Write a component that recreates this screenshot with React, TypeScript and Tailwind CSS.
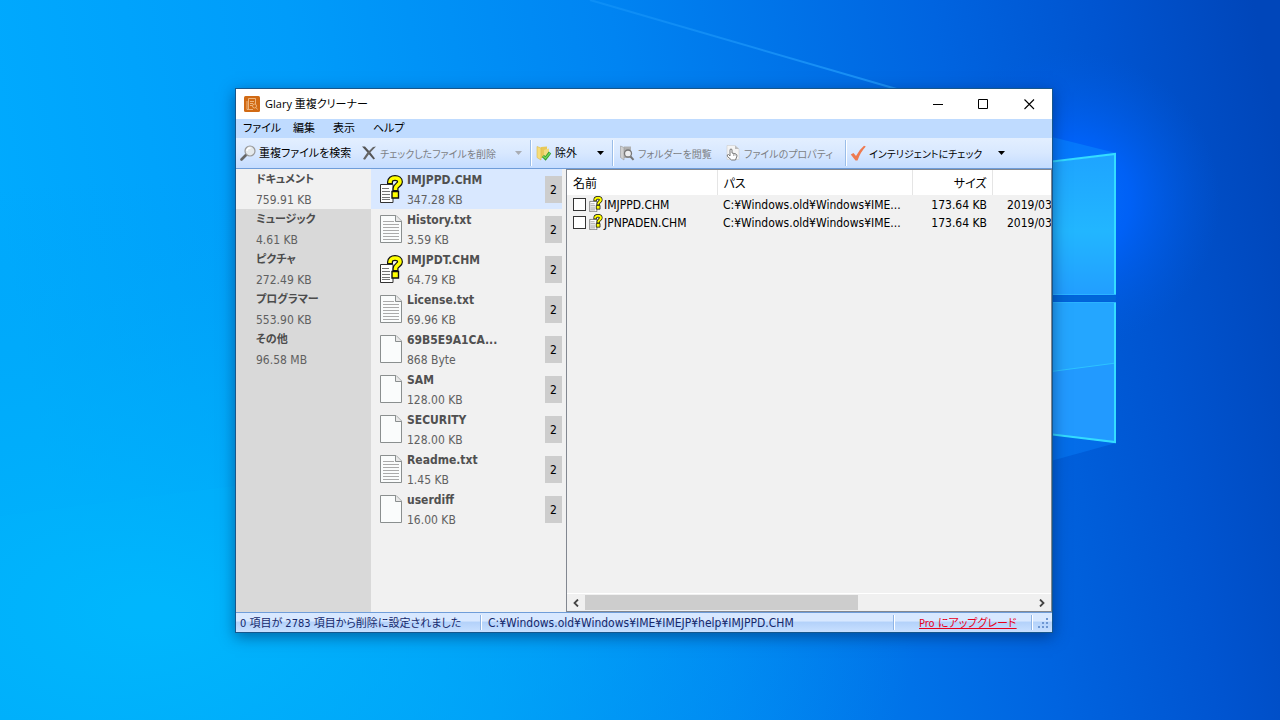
import type { ReactNode } from "react";
import clsx from "clsx";

type FileKind = "help" | "text" | "blank";

const categories = [
  { name: "ドキュメント", size: "759.91 KB" },
  { name: "ミュージック", size: "4.61 KB" },
  { name: "ピクチャ", size: "272.49 KB" },
  { name: "プログラマー", size: "553.90 KB" },
  { name: "その他", size: "96.58 MB" },
];

const groups: { name: string; size: string; kind: FileKind }[] = [
  { name: "IMJPPD.CHM", size: "347.28 KB", kind: "help" },
  { name: "History.txt", size: "3.59 KB", kind: "text" },
  { name: "IMJPDT.CHM", size: "64.79 KB", kind: "help" },
  { name: "License.txt", size: "69.96 KB", kind: "text" },
  { name: "69B5E9A1CA...", size: "868 Byte", kind: "blank" },
  { name: "SAM", size: "128.00 KB", kind: "blank" },
  { name: "SECURITY", size: "128.00 KB", kind: "blank" },
  { name: "Readme.txt", size: "1.45 KB", kind: "text" },
  { name: "userdiff", size: "16.00 KB", kind: "blank" },
];

const duplicates = ["IMJPPD.CHM", "JPNPADEN.CHM"];

// WALLPAPER
const Wallpaper = () => (
  <svg
    className="absolute inset-0 h-full w-full"
    viewBox="0 0 1280 720"
    preserveAspectRatio="none"
    aria-hidden="true"
  >
    <defs>
      <linearGradient id="sky" x1="0" y1="0.3" x2="1" y2="0.2">
        <stop offset="0" stopColor="#00aafe" />
        <stop offset="0.25" stopColor="#009cfa" />
        <stop offset="0.5" stopColor="#0084f2" />
        <stop offset="0.75" stopColor="#0064e0" />
        <stop offset="0.88" stopColor="#0054d0" />
        <stop offset="1" stopColor="#0046ba" />
      </linearGradient>
      <radialGradient id="cyan" cx="0.12" cy="0.85" r="0.6">
        <stop offset="0" stopColor="#00b8fd" stopOpacity="0.9" />
        <stop offset="0.5" stopColor="#00aef8" stopOpacity="0.5" />
        <stop offset="1" stopColor="#00a0f0" stopOpacity="0" />
      </radialGradient>
      <radialGradient id="glow" gradientUnits="userSpaceOnUse" cx="1070" cy="200" r="150">
        <stop offset="0" stopColor="#0670ff" />
        <stop offset="0.4" stopColor="#0064ff" stopOpacity="0.8" />
        <stop offset="1" stopColor="#005ae0" stopOpacity="0" />
      </radialGradient>
      <linearGradient id="paneTop" x1="0" y1="0" x2="0" y2="1">
        <stop offset="0" stopColor="#1ea4ff" />
        <stop offset="0.55" stopColor="#22b6ff" />
        <stop offset="1" stopColor="#229eff" />
      </linearGradient>
      <linearGradient id="beam" x1="0" y1="0" x2="1" y2="0">
        <stop offset="0" stopColor="#28a4ff" stopOpacity="0.3" />
        <stop offset="1" stopColor="#28a4ff" stopOpacity="0.7" />
      </linearGradient>
    </defs>
    <rect width="1280" height="720" fill="url(#sky)" />
    <rect width="1280" height="720" fill="url(#cyan)" />
    <rect width="1280" height="720" fill="url(#glow)" />
    <path d="M590 0 L900 90" stroke="url(#beam)" strokeWidth="2" />
    <path d="M0 516 L240 485 L240 720 L0 720Z" fill="#00baff" opacity="0.12" />
    <path d="M1040 134 L1116 153 L1040 163Z" fill="#0a8cff" opacity="0.5" />
    <path d="M1040 434 L1116 443 L1040 464Z" fill="#0a84ff" opacity="0.4" />
    <path d="M1040 164 L1116 154 V295 H1040Z" fill="url(#paneTop)" />
    <path d="M1040 302 H1116 V443 L1040 433Z" fill="#229aff" />
    <path d="M1040 302 H1116 V363 L1040 373Z" fill="#24a6ff" />
    <path d="M1040 373 L1116 363" stroke="#2cc4ff" strokeWidth="1" />
    <path d="M1040 163 L1115 154 V294" fill="none" stroke="#34dcff" strokeWidth="2" />
    <path d="M1040 433 L1115 442 V303" fill="none" stroke="#34dcff" strokeWidth="2" />
    <path d="M1040 294.500 H1116 M1040 302.500 H1116" stroke="#2ab4ff" />
    <path d="M1040 298.500 H1116" stroke="#0066d8" strokeWidth="6" />
  </svg>
);

// FILE ICONS
const HelpIcon = ({ className }: { className: string }) => (
  <svg viewBox="0 0 23 28" className={className} aria-hidden="true">
    <path d="M.5 9.500H13V27.500H.5Z" fill="#fff" stroke="#333" />
    <path d="M2 13.500H9M2 16.500H10M2 19.500H10M2 22.500H10M2 24.500H10" stroke="#777" />
    <path
      d="M10 9V7C10 4.500 12 3 15 3S20 4.500 20 7 15.500 10.500 15.500 13.500V16"
      fill="none"
      stroke="#111"
      strokeWidth="6"
    />
    <path d="M12 16.500H18.500V23H12Z" fill="#ff0" stroke="#111" strokeWidth="1.400" />
    <path
      d="M10 8V7C10 4.500 12 3 15 3S20 4.500 20 7 15.500 10.500 15.500 13.500V15"
      fill="none"
      stroke="#ff0"
      strokeWidth="3.600"
    />
  </svg>
);

const PageIcon = ({ lined }: { lined: boolean }) => (
  <svg viewBox="0 0 22 28" className="h-7 w-[22px]" aria-hidden="true">
    <path d="M.5 .5H16L21.500 6V27.500H.5Z" fill="#fafcfc" stroke="#8a8f8f" />
    <path d="M15.500 .5V6.500H21.500" fill="#e8e8e8" stroke="#8a8f8f" />
    {lined && (
      <path
        d="M3 6.500H14M3 9.500H19M3 12.500H19M3 15.500H19M3 18.500H19M3 21.500H19M3 24.500H19"
        stroke="#aaa"
      />
    )}
  </svg>
);

// TOOLBAR ICONS
const SearchIcon = () => (
  <svg viewBox="0 0 16 16" className="h-4 w-4 shrink-0" aria-hidden="true">
    <path d="M6 10L1.500 14.500" stroke="#666" strokeWidth="2.600" strokeLinecap="round" />
    <circle cx="10" cy="6" r="5" fill="#e4e9ec" stroke="#999" strokeWidth="1.200" />
    <path d="M7 6C7 4 8.500 3 10.500 3" fill="none" stroke="#fff" strokeWidth="1.500" />
  </svg>
);

const DeleteIcon = () => (
  <svg viewBox="0 0 16 16" className="h-4 w-4 shrink-0" aria-hidden="true">
    <path d="M1 1.500L4 1.500Q9 6.500 14 13.500L12.500 14.500Q7 8 1 1.500Z" fill="#555" />
    <path d="M15 1.500L12 2Q6 7 2 14L4 14.800Q8 8 15 1.500Z" fill="#666" />
  </svg>
);

const ExcludeIcon = () => (
  <svg viewBox="0 0 16 16" className="h-4 w-4 shrink-0" aria-hidden="true">
    <path d="M5 2L11 1.500V13H5Z" fill="#e8c95a" />
    <path d="M8 5L13 3.500V12L8 14Z" fill="#f3dc80" />
    <path d="M1 1.500L5 3V15L1 12.500Z" fill="#f6dd7a" stroke="#d9b84a" strokeWidth=".6" />
    <path d="M7 11L9.500 13.500L14 7.500" fill="none" stroke="#2f9a2f" strokeWidth="3" />
    <path d="M7 11L9.500 13.300L14 7.800" fill="none" stroke="#72d458" strokeWidth="1.400" />
  </svg>
);

const BrowseIcon = () => (
  <svg viewBox="0 0 16 16" className="h-4 w-4 shrink-0" aria-hidden="true">
    <path d="M5 1.500H12V13H5Z" fill="#b0b0b0" />
    <path d="M1.500 1L5 2.500V15L1.500 12.500Z" fill="#d0d0d0" stroke="#999" strokeWidth=".6" />
    <path d="M11.500 11.500L14.500 14.800" stroke="#777" strokeWidth="2" />
    <circle cx="9" cy="8.500" r="3.500" fill="#eee" stroke="#777" strokeWidth="1.300" />
  </svg>
);

const PropertiesIcon = () => (
  <svg viewBox="0 0 16 16" className="h-4 w-4 shrink-0" aria-hidden="true">
    <path d="M2 .5H10L14 4V14.500H2Z" fill="#f4f4f4" stroke="#ccc" strokeWidth=".6" />
    <path d="M10 .5V4H14Z" fill="#bbb" />
    <path
      d="M5 9V4.500Q6 3.500 7 4.500V8L11 9Q12 9.500 12 11L10.500 15H6.500L2.500 11.500Q1.500 9.500 3.500 9.500L5 11Z"
      fill="#fff"
      stroke="#777"
    />
    <path d="M8.500 8.500V11M10 9V11" stroke="#999" strokeWidth=".7" />
  </svg>
);

const CheckIcon = () => (
  <svg viewBox="0 0 16 16" className="h-4 w-4 shrink-0" aria-hidden="true">
    <path d="M.8 9.500L3.500 8L6 11Q9 5 14 .8L15.800 1.500Q10.500 7 7.500 15.500H5.500Z" fill="#ee7a50" />
  </svg>
);

const Caret = ({ muted }: { muted?: boolean }) => (
  <svg viewBox="0 0 7 4" className="ml-auto h-1 w-[7px] shrink-0" aria-hidden="true">
    <path d="M0 0H7L3.500 4Z" fill={muted ? "#a9adb4" : "#000"} />
  </svg>
);

const ToolButton = (props: {
  icon: ReactNode;
  label: string;
  className: string;
  disabled?: boolean;
  menu?: boolean;
}) => {
  const { icon, label, className, disabled, menu } = props;

  return (
    <button
      disabled={disabled}
      className={clsx(
        "flex h-full shrink-0 items-center gap-[3px] whitespace-nowrap",
        disabled ? "text-[#7c7f85]" : "text-black",
        className
      )}
    >
      {icon}
      <span className="pt-0.5">{label}</span>
      {menu && <Caret muted={disabled} />}
    </button>
  );
};

const Divider = () => (
  <span className="h-[26px] w-[2px] shrink-0 border-r border-l border-r-white border-l-[#9abde8]" />
);

// WINDOW PARTS
const TitleBar = () => (
  <header className="flex h-[30px] shrink-0 items-center bg-white pl-2">
    <svg viewBox="0 0 16 16" className="h-4 w-4" aria-hidden="true">
      <rect width="16" height="16" rx="1.500" fill="#d16a14" />
      <path d="M4.500 2.500H11.500V8M9 13.500H4.500V2.500M3 5V13.500H8" fill="none" stroke="#eeb47c" />
      <path d="M6 5.500H10M6 7.500H9M6 9.500H8" stroke="#eeb47c" />
      <circle cx="10.500" cy="10" r="2" fill="none" stroke="#eeb47c" />
      <path d="M12 11.500L13.500 13.500" stroke="#eeb47c" />
    </svg>
    <h1 className="ml-[5px] font-['Open_Sans','Noto_Sans_CJK_JP',sans-serif] text-[11px]">
      Glary 重複クリーナー
    </h1>
    <div className="ml-auto flex">
      <button aria-label="最小化" className="flex h-[30px] w-[46px] items-center justify-center">
        <svg viewBox="0 0 11 11" className="h-[11px] w-[11px]">
          <path d="M0 5.500H10" stroke="#000" />
        </svg>
      </button>
      <button aria-label="最大化" className="flex h-[30px] w-[45px] items-center justify-center">
        <svg viewBox="0 0 11 11" className="h-[11px] w-[11px]">
          <path d="M.5 .5H9.500V9.500H.5Z" fill="none" stroke="#000" />
        </svg>
      </button>
      <button aria-label="閉じる" className="flex h-[30px] w-[46px] items-center justify-center">
        <svg viewBox="0 0 11 11" className="h-[11px] w-[11px]">
          <path d="M.5 .5L10 10M10 .5L.5 10" stroke="#000" strokeWidth="1.100" />
        </svg>
      </button>
    </div>
  </header>
);

const MenuBar = () => (
  <nav className="flex h-[19px] shrink-0 items-center bg-[#bfdbff] pt-px pl-[7px] text-[11px]">
    <button className="w-[50px] text-left">ファイル</button>
    <button className="w-10 text-left">編集</button>
    <button className="w-10 text-left">表示</button>
    <button className="text-left">ヘルプ</button>
  </nav>
);

const Toolbar = () => (
  <div className="flex h-[31px] shrink-0 items-center overflow-hidden border-b border-[#6f9dd9] bg-linear-to-b from-[#e3efff] via-[#d8e8ff] to-[#c4dcff] text-[10px]">
    <ToolButton
      icon={<SearchIcon />}
      label="重複ファイルを検索"
      className="w-[125px] pl-1 text-[11px]"
    />
    <ToolButton
      icon={<DeleteIcon />}
      label="チェックしたファイルを削除"
      className="w-[169px] pr-2"
      disabled
      menu
    />
    <Divider />
    <ToolButton icon={<ExcludeIcon />} label="除外" className="w-20 pr-2 pl-1 text-[11px]" menu />
    <Divider />
    <ToolButton icon={<BrowseIcon />} label="フォルダーを閲覧" className="w-[111px] pl-[5px]" disabled />
    <ToolButton icon={<PropertiesIcon />} label="ファイルのプロパティ" className="w-[120px]" disabled />
    <Divider />
    <ToolButton
      icon={<CheckIcon />}
      label="インテリジェントにチェック"
      className="w-[162px] pr-1 pl-[3px]"
      menu
    />
  </div>
);

const Sidebar = () => (
  <ul className="w-[135px] shrink-0 bg-[#d9d9d9] leading-5">
    {categories.map((category, i) => (
      <li key={category.name} className={clsx("h-10 pt-px pl-5", i === 0 && "bg-[#f1f1f1]")}>
        <p className="h-5 text-[11px] font-bold text-[#4c4c4c]">{category.name}</p>
        <p className="h-5 text-[12px] text-[#606060]">{category.size}</p>
      </li>
    ))}
  </ul>
);

const GroupList = () => (
  <ul className="w-[191px] shrink-0 leading-5">
    {groups.map((group, i) => (
      <li
        key={group.name}
        className={clsx("flex h-10 items-center pl-[9px]", i === 0 && "bg-[#d9e8ff]")}
      >
        <span className="w-[27px] shrink-0">
          {group.kind === "help" ? (
            <HelpIcon className="h-7 w-[23px]" />
          ) : (
            <PageIcon lined={group.kind === "text"} />
          )}
        </span>
        <div className="min-w-0 flex-1 pt-0.5 text-[12px] whitespace-nowrap">
          <p className="h-5 font-bold text-[#505050]">{group.name}</p>
          <p className="h-5 text-[#606060]">{group.size}</p>
        </div>
        <span className="flex h-[27px] w-[17px] items-center justify-center bg-[#cdcdcd] pt-0.5 text-[12px] text-black">
          2
        </span>
      </li>
    ))}
  </ul>
);

const DuplicateTable = () => (
  <div className="ml-1 flex min-w-0 flex-1 flex-col border border-[#828790] bg-[#f1f1f1]">
    <div className="min-h-0 flex-1 overflow-hidden">
      <table className="w-[600px] table-fixed border-collapse text-[12px] text-black">
        <colgroup>
          <col className="w-[150px]" />
          <col className="w-[195px]" />
          <col className="w-20" />
          <col />
        </colgroup>
        <thead>
          <tr className="h-[25px] bg-white text-left">
            <th className="border-r border-[#e5e5e5] pt-0.5 pl-[6px] font-normal">名前</th>
            <th className="border-r border-[#e5e5e5] pt-0.5 pl-[6px] font-normal">パス</th>
            <th className="border-r border-[#e5e5e5] pt-0.5 pr-[5px] text-right font-normal">
              サイズ
            </th>
            <th />
          </tr>
        </thead>
        <tbody className="leading-4 whitespace-nowrap">
          {duplicates.map((name) => (
            <tr key={name}>
              <td className="p-0">
                <label className="flex h-[18px] items-center pl-[6px]">
                  <input
                    type="checkbox"
                    className="mr-[2px] h-[13px] w-[13px] shrink-0 appearance-none border border-[#333] bg-white"
                  />
                  <HelpIcon className="h-4 w-4 shrink-0" />
                  <span className="pt-0.5">{name}</span>
                </label>
              </td>
              <td className="p-0 pt-0.5 pl-[6px]">C:¥Windows.old¥Windows¥IME...</td>
              <td className="p-0 pt-0.5 pr-[5px] text-right">173.64 KB</td>
              <td className="p-0 pt-0.5 pl-[15px]">2019/03</td>
            </tr>
          ))}
        </tbody>
      </table>
    </div>
    <div className="flex h-[18px] shrink-0 items-center justify-between border-t border-white bg-[#f0f0f0]">
      <button aria-label="左へスクロール" className="flex h-full w-[18px] items-center justify-center">
        <svg viewBox="0 0 6 8" className="h-2 w-[6px]">
          <path d="M5 .5L1.500 4L5 7.500" fill="none" stroke="#444" strokeWidth="1.800" />
        </svg>
      </button>
      <div className="h-[15px] flex-1">
        <div className="h-full w-[61%] bg-[#cdcdcd]" />
      </div>
      <button aria-label="右へスクロール" className="flex h-full w-[18px] items-center justify-center">
        <svg viewBox="0 0 6 8" className="h-2 w-[6px]">
          <path d="M1 .5L4.500 4L1 7.500" fill="none" stroke="#444" strokeWidth="1.800" />
        </svg>
      </button>
    </div>
  </div>
);

const StatusDivider = () => (
  <span className="h-[15px] w-[2px] shrink-0 border-r border-l border-r-white border-l-[#8fb4e6]" />
);

const StatusBar = () => (
  <footer className="flex h-5 shrink-0 items-center border-t border-[#6f9dd9] bg-linear-to-b from-[#d8e8ff] from-40% via-[#b4d2fa] via-50% to-[#c8e0ff] whitespace-nowrap text-[#15286b]">
    <p className="w-[244px] shrink-0 pt-[3px] pl-1 text-[11px]">0 項目が 2783 項目から削除に設定されました</p>
    <StatusDivider />
    <p className="min-w-0 flex-1 overflow-hidden pt-px pl-[6px] text-[12px]">
      C:¥Windows.old¥Windows¥IME¥IMEJP¥help¥IMJPPD.CHM
    </p>
    <StatusDivider />
    <a href="#upgrade" className="w-[136px] pt-[3px] pl-6 text-[11px] text-[#e8001c] underline">
      Pro にアップグレード
    </a>
    <StatusDivider />
    <svg viewBox="0 0 19 14" className="h-[14px] w-[19px]" aria-hidden="true">
      <path
        d="M5 10h2v2H5zM9 10h2v2H9zM13 10h2v2h-2zM9 6h2v2H9zM13 6h2v2h-2zM13 2h2v2h-2z"
        fill="#6d96d2"
      />
    </svg>
  </footer>
);

export default function App() {
  return (
    <div className="relative flex min-h-screen bg-[#0082ee] pt-[88px] pr-[227px] pb-[87px] pl-[235px] font-['DejaVu_Sans_Condensed','Noto_Sans_CJK_JP',sans-serif] [font-feature-settings:'palt']">
      <Wallpaper />
      <main className="relative flex min-w-0 flex-1 flex-col border border-[#17578c] bg-[#f1f1f1] shadow-[0_4px_14px_rgba(0,30,80,0.5)]">
        <TitleBar />
        <MenuBar />
        <Toolbar />
        <div className="flex flex-1">
          <Sidebar />
          <GroupList />
          <DuplicateTable />
        </div>
        <StatusBar />
      </main>
    </div>
  );
}
